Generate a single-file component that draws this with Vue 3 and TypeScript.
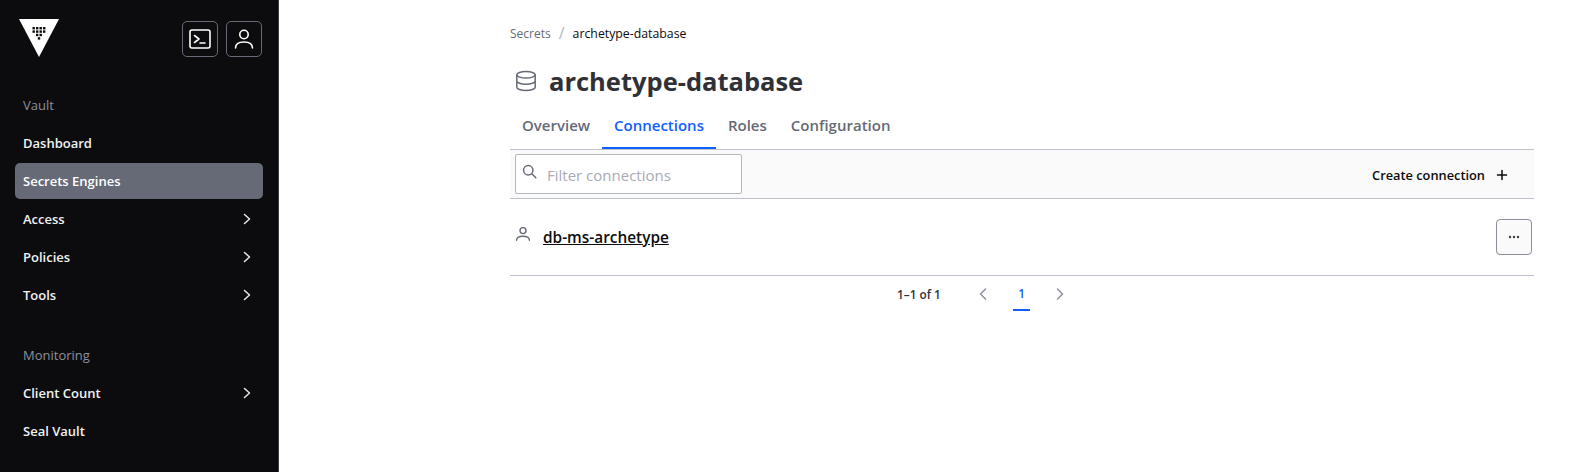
<script setup lang="ts">
const groups: { label: string; items: { name: string; active?: boolean; more?: boolean }[] }[] = [
  {
    label: 'Vault',
    items: [
      { name: 'Dashboard' },
      { name: 'Secrets Engines', active: true },
      { name: 'Access', more: true },
      { name: 'Policies', more: true },
      { name: 'Tools', more: true },
    ],
  },
  {
    label: 'Monitoring',
    items: [{ name: 'Client Count', more: true }, { name: 'Seal Vault' }],
  },
]
const tabs = ['Overview', 'Connections', 'Roles', 'Configuration']
</script>

<template>
  <div class="page">
    <aside class="sidebar">
      <div class="top">
        <svg class="logo" width="40" height="38" viewBox="0 0 40 38">
          <path d="M0 0H40L20 38Z" fill="#fff" />
          <g fill="#0c0c0e">
            <rect x="13.5" y="8" width="2.4" height="2.4" />
            <rect x="17" y="8" width="2.4" height="2.4" />
            <rect x="20.5" y="8" width="2.4" height="2.4" />
            <rect x="24" y="8" width="2.4" height="2.4" />
            <rect x="13.5" y="11.4" width="2.4" height="2.4" />
            <rect x="17" y="11.4" width="2.4" height="2.4" />
            <rect x="20.5" y="11.4" width="2.4" height="2.4" />
            <rect x="24" y="11.4" width="2.4" height="2.4" />
            <rect x="17" y="14.8" width="2.4" height="2.4" />
            <rect x="20.5" y="14.8" width="2.4" height="2.4" />
            <rect x="18.8" y="18.2" width="2.4" height="2.4" />
          </g>
        </svg>
        <div class="top-btns">
          <button class="icon-btn">
            <svg width="24" height="24" viewBox="0 0 24 24" fill="none" stroke="#fff" stroke-width="1.6" stroke-linecap="round" stroke-linejoin="round">
              <rect x="2" y="3" width="20" height="18" rx="2" />
              <path d="M6.5 8.5 11 12l-4.5 3.5M12 16h5" />
            </svg>
          </button>
          <button class="icon-btn">
            <svg width="24" height="24" viewBox="0 0 24 24" fill="none" stroke="#fff" stroke-width="1.6" stroke-linecap="round">
              <circle cx="12" cy="7.5" r="4.2" />
              <path d="M3.5 21c0-4 3.5-6 8.5-6s8.5 2 8.5 6" />
            </svg>
          </button>
        </div>
      </div>
      <nav v-for="g in groups" :key="g.label" class="group">
        <div class="group-label">{{ g.label }}</div>
        <a v-for="i in g.items" :key="i.name" class="nav-item" :class="{ active: i.active }">
          <span>{{ i.name }}</span>
          <svg v-if="i.more" width="16" height="16" viewBox="0 0 16 16" fill="none" stroke="#e6e8ec" stroke-width="1.5" stroke-linecap="round" stroke-linejoin="round">
            <path d="m5.5 3.5 5 4.5-5 4.5" />
          </svg>
        </a>
      </nav>
    </aside>

    <main class="main">
      <div class="breadcrumb">
        <span class="crumb">Secrets</span>
        <span class="sep">/</span>
        <span class="current">archetype-database</span>
      </div>
      <h1 class="title">
        <svg width="22" height="22" viewBox="0 0 22 22" fill="none" stroke="#656a76" stroke-width="1.5">
          <ellipse cx="11" cy="4.8" rx="9.2" ry="3.3" />
          <path d="M1.8 4.8v12.4c0 1.8 4.1 3.3 9.2 3.3s9.2-1.5 9.2-3.3V4.8M1.8 11c0 1.8 4.1 3.3 9.2 3.3s9.2-1.5 9.2-3.3" />
        </svg>
        archetype-database
      </h1>
      <div class="tabs">
        <a v-for="t in tabs" :key="t" class="tab" :class="{ on: t === 'Connections' }">{{ t }}</a>
      </div>
      <div class="toolbar">
        <label class="filter">
          <svg width="15" height="15" viewBox="0 0 18 18" fill="none" stroke="#656a76" stroke-width="1.8" stroke-linecap="round">
            <circle cx="7.5" cy="7.5" r="5.6" />
            <path d="m11.8 11.8 4.8 4.8" />
          </svg>
          <input placeholder="Filter connections" />
        </label>
        <a class="create">
          Create connection
          <svg width="12" height="12" viewBox="0 0 12 12" stroke="#0c0c0e" stroke-width="1.5" stroke-linecap="round">
            <path d="M6 1.5v9M1.5 6h9" />
          </svg>
        </a>
      </div>
      <div class="row">
        <div class="row-name">
          <svg class="user" width="16" height="16" viewBox="0 0 16 16" fill="none" stroke="#656a76" stroke-width="1.4" stroke-linecap="round">
            <circle cx="8" cy="4.6" r="3" />
            <path d="M1.6 14.2c0-2.8 2.6-4 6.4-4s6.4 1.2 6.4 4" />
          </svg>
          <a class="link">db-ms-archetype</a>
        </div>
        <button class="more">
          <svg width="14" height="4" viewBox="0 0 14 4" fill="#3b3d45">
            <circle cx="3" cy="2" r="1.2" /><circle cx="7" cy="2" r="1.2" /><circle cx="11" cy="2" r="1.2" />
          </svg>
        </button>
      </div>
      <div class="pager">
        <span class="count">1–1 of 1</span>
        <svg class="chev" width="16" height="16" viewBox="0 0 16 16" fill="none" stroke="#8c909c" stroke-width="1.5" stroke-linecap="round" stroke-linejoin="round"><path d="m10.5 3-5 5 5 5" /></svg>
        <span class="page-num">1</span>
        <svg class="chev" width="16" height="16" viewBox="0 0 16 16" fill="none" stroke="#8c909c" stroke-width="1.5" stroke-linecap="round" stroke-linejoin="round"><path d="m5.5 3 5 5-5 5" /></svg>
      </div>
    </main>
  </div>
</template>

<style>
html, body { margin: 0; background: #fff; }
</style>

<style scoped>
* { box-sizing: border-box; }
.page {
  display: flex;
  height: 472px;
  overflow: hidden;
  font-family: "Open Sans", "Noto Sans", sans-serif;
  color: #0c0c0e;
}
.sidebar {
  width: 279px;
  flex: none;
  background: #0c0c0e;
  border-right: 1px solid #3b3d45;
  padding: 19px 15px 0;
}
.top {
  display: flex;
  justify-content: space-between;
  padding: 0 1px 0 4px;
  height: 38px;
}
.top-btns { display: flex; gap: 8px; padding-top: 2px; }
.icon-btn {
  width: 36px;
  height: 36px;
  padding: 0;
  background: transparent;
  border: 1px solid #656a76;
  border-radius: 5px;
  display: flex;
  align-items: center;
  justify-content: center;
}
.group { margin-bottom: 33px; }
.top + .group { margin-top: 39px; }
.group-label {
  color: #8c909c;
  font-size: 13px;
  line-height: 18px;
  padding-left: 8px;
  margin-bottom: 11px;
}
.nav-item {
  display: flex;
  align-items: center;
  justify-content: space-between;
  height: 36px;
  margin-bottom: 2px;
  padding: 0 8px 0 8px;
  border-radius: 5px;
  color: #f1f2f3;
  font-size: 13px;
  font-weight: 600;
}
.nav-item.active { background: #656a76; color: #fff; }

.main {
  width: 1024px;
  margin-left: 231px;
  flex: none;
}
.breadcrumb {
  display: flex;
  align-items: center;
  height: 18px;
  margin-top: 24px;
  font-size: 12.3px;
}
.crumb { color: #656a76; font-size: 12px; }
.sep { color: #b2b6bd; margin: 0 8px; font-size: 16px; }
.current { color: #0c0c0e; }
.title {
  display: flex;
  align-items: center;
  gap: 12px;
  height: 36px;
  margin: 21px 0 0 5px;
  padding-left: 0;
  font-size: 25.5px;
  font-weight: 700;
  color: #2f3137;
}
.tabs {
  display: flex;
  height: 44px;
  margin-top: 6px;
}
.tab {
  padding: 10px 12px 0;
  font-size: 15px;
  font-weight: 600;
  color: #656a76;
}
.tab.on {
  color: #1060ff;
  border-bottom: 2px solid #1060ff;
}
.toolbar {
  display: flex;
  align-items: center;
  justify-content: space-between;
  height: 50px;
  padding: 0 26px 0 5px;
  background: #fafafa;
  border-top: 1px solid #bfc2cc;
  border-bottom: 1px solid #bfc2cc;
}
.filter {
  display: flex;
  align-items: center;
  width: 227px;
  height: 40px;
  padding: 0 0 3px 6px;
  gap: 10px;
  background: #fff;
  border: 1px solid #b2b6bd;
  border-radius: 2px;
}
.filter svg { margin-bottom: 3px; }
.filter input {
  border: 0;
  outline: 0;
  min-width: 0;
  flex: 1;
  padding: 5px 0 0;
  background: transparent;
  font: 400 15px "Open Sans", sans-serif;
}
.filter input::placeholder { color: #a8abb3; opacity: 1; }
.create {
  display: flex;
  align-items: center;
  gap: 11px;
  font-size: 12.8px;
  font-weight: 600;
  padding-top: 2px;
}
.row {
  display: flex;
  align-items: center;
  justify-content: space-between;
  height: 77px;
  padding: 0 2px 0 5px;
  border-bottom: 1px solid #bfc2cc;
}
.row-name { display: flex; align-items: center; gap: 12px; }
.user { margin-bottom: 7px; }
.link {
  font-size: 15.4px;
  font-weight: 600;
  color: #0c0c0e;
  text-decoration: underline;
}
.more {
  width: 36px;
  height: 36px;
  padding: 0;
  background: #fafafa;
  border: 1px solid #8c909c;
  border-radius: 4px;
  display: flex;
  align-items: center;
  justify-content: center;
}
.pager {
  display: flex;
  align-items: center;
  height: 35px;
  padding: 0 0 0 387px;
  font-size: 11.8px;
}
.count { font-weight: 600; color: #2f3137; width: 78px; }
.chev { flex: none; }
.page-num {
  width: 17px;
  margin: 0 22px 0 22px;
  height: 35px;
  line-height: 35px;
  text-align: center;
  color: #1060ff;
  font-weight: 600;
  border-bottom: 2px solid #1060ff;
}
</style>
